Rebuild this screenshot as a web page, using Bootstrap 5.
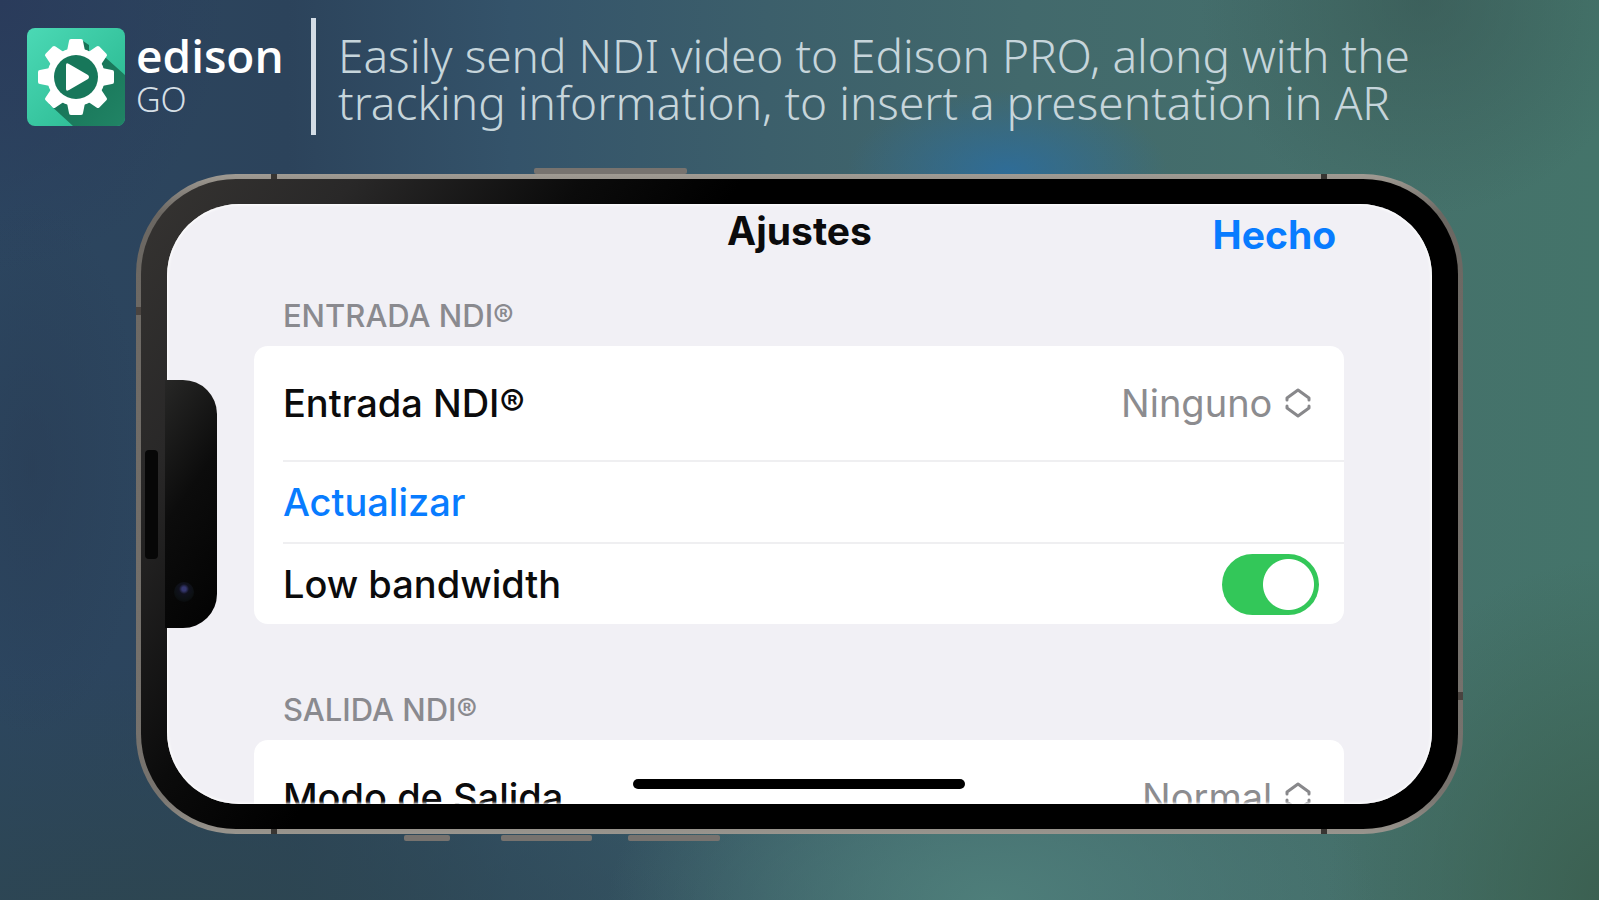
<!DOCTYPE html>
<html lang="es">
<head>
<meta charset="utf-8">
<meta name="viewport" content="width=device-width, initial-scale=1">
<title>Edison GO</title>
<link href="https://cdn.jsdelivr.net/npm/bootstrap@5.3.0/dist/css/bootstrap.min.css" rel="stylesheet">
<style>
  body {
    font-family: Inter, "Liberation Sans", sans-serif;
    background:
      radial-gradient(ellipse 10% 9% at 63% 19%, #2c6d9ddd 0%, #2c6d9d00 100%),
      radial-gradient(ellipse 14% 24% at 89% 0%, #37555299 0%, #37555200 100%),
      radial-gradient(ellipse 24% 22% at 62% 100%, #4e7e7a 0%, #4e7e7a00 100%),
      radial-gradient(ellipse 18% 38% at 101% 100%, #3b5f50 0%, #3b5f5000 100%),
      radial-gradient(ellipse 14% 30% at 0% 0%, #2a3b5b 0%, #2a3b5b00 100%),
      radial-gradient(ellipse 7% 30% at 2% 52%, #293c5499 0%, #293c5400 100%),
      radial-gradient(ellipse 50% 30% at 12% 104%, #2d4650 0%, #2d465000 100%),
      linear-gradient(90deg, #2c4660 0%, #2c435b 18%, #34536a 32%, #3c5f6b 48%, #42696c 64%, #45706b 84%, #44746a 100%);
    background-color: #36566b;
  }
  .stage { min-height: 100vh; }
  .masthead { padding: 18px 24px 39px 27px; }
  .logo { width: 98px; height: 98px; margin-top: 10px; }
  .brand { width: 148px; margin-left: 11px; padding-top: 14px; color: #fff; }
  .brand-name { font-family: "Open Sans", sans-serif; font-size: 46px; line-height: 46px; font-weight: 600; }
  .brand-tier { font-family: "Noto Sans", sans-serif; font-size: 34px; line-height: 42px; font-weight: 300; color: #d5dfe6; }
  .rule { width: 5px; height: 117px; margin-left: 27px; background: #d3dde6; }
  .tagline { margin: 0 0 0 22px; padding-top: 14px; font-family: "Noto Sans", sans-serif; font-size: 46px; line-height: 47px; font-weight: 300; color: #c6d5db; }

  .phone {
    margin: 0 auto;
    width: 83%;
    aspect-ratio: 1326 / 659;
    padding: 5px;
    border-radius: 100px;
    background: linear-gradient(#a09b93, #6b6762 6%, #77736e 94%, #99958e);
  }
  .bezel {
    padding: 25px 26px;
    border-radius: 95px;
    background: linear-gradient(125deg, #363432 0%, #292828 12%, #0b0b0b 25%, #000 34%);
  }
  .display-area {
    border-radius: 72px;
    background: #f1f0f5;
    color: #0b0b0c;
  }
  .glass { inset: 0; border-radius: 72px; box-shadow: inset 0 0 3px 1px #fff; pointer-events: none; }
  .side-key { height: 6px; background: #77736f; border-radius: 2px; }
  .band-x { width: 6px; height: 5px; background: #383532; }
  .band-y { width: 5px; height: 8px; background: #4a4440; }

  .notch {
    left: -2px; top: 29.4%; width: 52px; height: 41.4%;
    background: linear-gradient(125deg, #272726, #0c0c0c 45%, #020202);
    border-radius: 0 34px 34px 0;
  }
  .earpiece { left: -20px; top: 28%; width: 13px; height: 44%; border-radius: 4px; background: #070707; }
  .lens { left: 9px; bottom: 26px; width: 20px; height: 20px; border-radius: 50%;
    background: radial-gradient(circle at 50% 35%, #35376f 0 2px, #10111d 5px, #0c1013 60%, #060606); }

  .title-bar { padding: 7px 96px 0; height: 96px; display: grid; grid-template-columns: 1fr auto 1fr; }
  .sheet-title { font-size: 39px; line-height: 40px; font-weight: 700; margin: 0; }
  .done { font-size: 39px; line-height: 48px; font-weight: 700; color: #087cff; justify-self: end; align-self: start; }
  .form-area { padding: 0 88px 0 87px; }
  .group-label { font-size: 31px; line-height: 32px; font-weight: 450; color: #8a8a8f; margin: 0; padding: 0 29px; }
  .group-box { background: #fff; border-radius: 14px; margin: 14px 0 70px; padding-left: 29px; }
  .item { height: 82px; padding-right: 33px; font-size: 38px; line-height: 44px; font-weight: 500; }
  .item + .item { border-top: 2px solid #efeff1; }
  .item-tall { height: 114px; }
  .refresh { color: #087cff; font-weight: 500; font-size: 38px; line-height: 44px; }
  .picker { appearance: none; border: 0; background: none; padding: 0; color: #8c8c8f; font-weight: 400; font-size: 38px; line-height: 44px; opacity: 1; }
  .chev { width: 26px; height: 32px; margin-left: 12px; }
  .toggle.form-check-input {
    width: 97px; height: 61px; margin: 0 -8px 0 0; border: 0; border-radius: 31px;
    background-color: #33c759; background-size: 53px 53px; background-position: right 4px center;
    background-image: radial-gradient(circle, #fff 0 25px, transparent 26px);
  }
  .home-bar { left: 50%; bottom: 15px; width: 332px; height: 10px; margin-left: -167px; border-radius: 5px; background: #000; }
</style>
</head>
<body>
<div class="stage overflow-hidden">
  <header class="masthead d-flex align-items-start">
    <svg class="logo flex-shrink-0" viewBox="0 0 98 98" role="img" aria-label="Edison GO">
      <defs>
        <linearGradient id="tile" x1="0" y1="0" x2="1" y2="1"><stop offset="0" stop-color="#4bd9b5"/><stop offset="1" stop-color="#27b58d"/></linearGradient>
        <linearGradient id="shade" x1="0" y1="0" x2="1" y2="1"><stop offset="0" stop-color="#126b50"/><stop offset="1" stop-color="#218465"/></linearGradient>
        <clipPath id="tile-clip"><rect width="98" height="98" rx="8"/></clipPath>
      </defs>
      <rect width="98" height="98" rx="8" fill="url(#tile)"/>
      <g clip-path="url(#tile-clip)">
        <path d="M56 13 L62 17 V25 L79 30 L98 47 V98 H46 L22 76 L48 49Z" fill="url(#shade)"/>
      </g>
      <g fill="#fff" transform="translate(49 49)">
        <circle r="29"/>
        <path id="tooth" d="M-9-26 L-7-36 Q-7-38-5-38 H5 Q7-38 7-36 L9-26Z"/>
        <use href="#tooth" transform="rotate(45)"/><use href="#tooth" transform="rotate(90)"/><use href="#tooth" transform="rotate(135)"/>
        <use href="#tooth" transform="rotate(180)"/><use href="#tooth" transform="rotate(225)"/><use href="#tooth" transform="rotate(270)"/><use href="#tooth" transform="rotate(315)"/>
        <circle r="22" fill="#17775a"/>
        <path d="M-10-12 Q-10-15-7-13 L12-2 Q14 0 12 2 L-7 13 Q-10 15-10 12Z"/>
      </g>
    </svg>
    <div class="brand flex-shrink-0">
      <div class="brand-name">edison</div>
      <div class="brand-tier">GO</div>
    </div>
    <div class="rule flex-shrink-0"></div>
    <p class="tagline">Easily send NDI video to Edison PRO, along with the<br>tracking information, to insert a presentation in AR</p>
  </header>

  <main class="phone position-relative">
    <span class="side-key position-absolute" style="left:30%;top:-6px;width:11.5%"></span>
    <span class="side-key position-absolute" style="left:20.2%;bottom:-7px;width:3.5%"></span>
    <span class="side-key position-absolute" style="left:27.5%;bottom:-7px;width:6.9%"></span>
    <span class="side-key position-absolute" style="left:37.1%;bottom:-7px;width:6.9%"></span>
    <span class="band-x position-absolute" style="left:10.2%;top:0"></span>
    <span class="band-x position-absolute" style="left:89.3%;top:0"></span>
    <span class="band-x position-absolute" style="left:10.2%;bottom:0"></span>
    <span class="band-x position-absolute" style="left:89.3%;bottom:0"></span>
    <span class="band-y position-absolute" style="left:0;top:20.2%"></span>
    <span class="band-y position-absolute" style="right:0;top:78.5%"></span>
    <div class="bezel h-100">
      <div class="position-relative h-100">
        <section class="display-area h-100 overflow-hidden">
          <div class="title-bar">
            <span></span>
            <h1 class="sheet-title">Ajustes</h1>
            <button type="button" class="done btn p-0 border-0">Hecho</button>
          </div>
          <form class="form-area">
            <h2 class="group-label">ENTRADA NDI®</h2>
            <div class="group-box">
              <div class="item item-tall d-flex align-items-center justify-content-between">
                <label for="ndi-in">Entrada NDI®</label>
                <span class="d-flex align-items-center">
                  <select id="ndi-in" class="picker"><option>Ninguno</option></select>
                  <svg class="chev" viewBox="0 0 26 32" fill="none" stroke="#88888b" stroke-width="3" stroke-linejoin="round" stroke-linecap="round" aria-hidden="true"><path d="M2 13V11L13 3L24 11V13M2 19V21L13 29L24 21V19"/></svg>
                </span>
              </div>
              <div class="item d-flex align-items-center">
                <button type="button" class="refresh btn p-0 border-0">Actualizar</button>
              </div>
              <div class="item d-flex align-items-center justify-content-between">
                <label for="low-bw">Low bandwidth</label>
                <input id="low-bw" class="toggle form-check-input flex-shrink-0" type="checkbox" role="switch" checked>
              </div>
            </div>
            <h2 class="group-label">SALIDA NDI®</h2>
            <div class="group-box">
              <div class="item item-tall d-flex align-items-center justify-content-between">
                <label for="ndi-out">Modo de Salida</label>
                <span class="d-flex align-items-center">
                  <select id="ndi-out" class="picker"><option>Normal</option></select>
                  <svg class="chev" viewBox="0 0 26 32" fill="none" stroke="#88888b" stroke-width="3" stroke-linejoin="round" stroke-linecap="round" aria-hidden="true"><path d="M2 13V11L13 3L24 11V13M2 19V21L13 29L24 21V19"/></svg>
                </span>
              </div>
            </div>
          </form>
        </section>
        <span class="glass position-absolute"></span>
        <div class="notch position-absolute"><span class="earpiece position-absolute"></span><span class="lens position-absolute"></span></div>
        <span class="home-bar position-absolute"></span>
      </div>
    </div>
  </main>
</div>
<script src="https://cdn.jsdelivr.net/npm/bootstrap@5.3.0/dist/js/bootstrap.bundle.min.js"></script>
</body>
</html>
